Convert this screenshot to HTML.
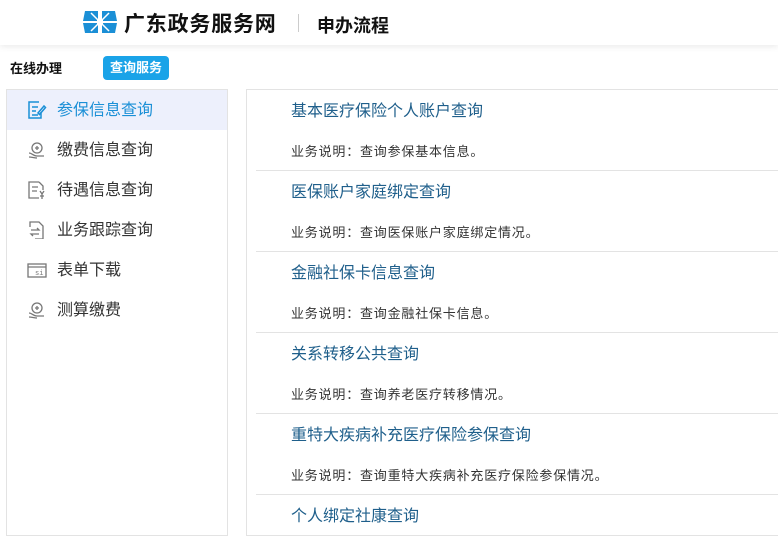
<!DOCTYPE html>
<html><head><meta charset="utf-8"><style>
*{margin:0;padding:0;box-sizing:border-box}
body{width:778px;height:540px;background:#fff;font-family:"Liberation Sans","Noto Sans CJK SC",sans-serif;position:relative;overflow:hidden;color:#333}
.hdr{position:absolute;left:0;top:0;width:778px;height:45px;background:#fff;box-shadow:0 2px 6px rgba(0,0,0,.08)}
.logo{position:absolute;left:83px;top:11px}
.t1{position:absolute;left:124px;top:8px;font-size:21px;font-weight:bold;color:#111;letter-spacing:0.8px}
.sep{position:absolute;left:298px;top:14px;width:1px;height:18px;background:#ccc}
.t2{position:absolute;left:317px;top:12px;font-size:18px;font-weight:bold;color:#111}
.tab1{position:absolute;left:10px;top:58px;font-size:13px;font-weight:bold;color:#111}
.tab2{position:absolute;left:103px;top:56px;width:66px;height:24px;border-radius:4px;background:#1aa3e8;color:#fff;font-size:13px;font-weight:bold;text-align:center;line-height:24px}
.left{position:absolute;left:6px;top:89px;width:222px;height:447px;border:1px solid #e3e3e3}
.row{position:absolute;left:0;width:220px;height:40px;font-size:16px;color:#333;line-height:42px;padding-left:50px}
.row.act{background:#edf0fc;color:#1a8fd6}
.row svg{position:absolute;left:20px;top:11px}
.right{position:absolute;left:246px;top:89px;width:540px;height:447px;border:1px solid #e3e3e3}
.it{position:absolute;left:291px;font-size:16px;color:#1f5f8b}
.ds{position:absolute;left:291px;font-size:13px;color:#333;letter-spacing:0.8px}
.dv{position:absolute;left:256px;width:522px;height:1px;background:#e3e3e3}
</style></head><body>
<div class="hdr">
<svg class="logo" width="34" height="22" viewBox="0 0 34 22"><polygon points="2,0 15,0 15,10 0,10" fill="#1b8fd6"/><polygon points="19,0 32,0 34,10 19,10" fill="#1b8fd6"/><polygon points="0,12 15,12 15,22 2,22" fill="#1b8fd6"/><polygon points="19,12 34,12 32,22 19,22" fill="#1b8fd6"/><g stroke="#fff" stroke-width="1.5"><line x1="17" y1="0" x2="17" y2="22"/><line x1="0" y1="11" x2="34" y2="11"/><line x1="8" y1="2" x2="26" y2="20"/><line x1="26" y1="2" x2="8" y2="20"/></g><rect x="14" y="8" width="6" height="6" fill="#fff"/></svg>
<div class="t1">广东政务服务网</div>
<div class="sep"></div>
<div class="t2">申办流程</div>
</div>
<div class="tab1">在线办理</div>
<div class="tab2">查询服务</div>
<div class="left">
<div class="row act" style="top:0"><svg width="20" height="18" viewBox="0 0 20 18" fill="none" stroke="#1a8fd6" stroke-width="1.5"><path d="M12 1H2v16h12v-6"/><path d="M5 6h6M5 10h4M5 14h6"/><path d="M11 12l6-7 1.5 1.5-6 7z"/></svg>参保信息查询</div>
<div class="row" style="top:40px"><svg width="20" height="18" viewBox="0 0 20 18" fill="none" stroke="#777" stroke-width="1.3"><circle cx="10" cy="7" r="5"/><path d="M2 12c3 0 4 3 8 3h7M2 16c3 0 5 1 8 1"/><path d="M8 7h4M10 5v4"/></svg>缴费信息查询</div>
<div class="row" style="top:80px"><svg width="20" height="18" viewBox="0 0 20 18" fill="none" stroke="#777" stroke-width="1.3"><path d="M12 1H2v16h10M12 1l4 4v4"/><path d="M5 6h6M5 10h5"/><path d="M13 10l2 3 2-3M15 13v5M13 15h4"/></svg>待遇信息查询</div>
<div class="row" style="top:120px"><svg width="20" height="18" viewBox="0 0 20 18" fill="none" stroke="#777" stroke-width="1.3"><path d="M3 6V1h9l4 4v13H8"/><path d="M4 9h8l-2-2M12 13H4l2 2"/></svg>业务跟踪查询</div>
<div class="row" style="top:160px"><svg width="20" height="18" viewBox="0 0 20 18" fill="none" stroke="#777" stroke-width="1.3"><rect x="1" y="3" width="18" height="13"/><path d="M1 6h18"/><text x="8" y="14" font-size="7" fill="#777" stroke="none" font-family="Liberation Mono">si</text></svg>表单下载</div>
<div class="row" style="top:200px"><svg width="20" height="18" viewBox="0 0 20 18" fill="none" stroke="#777" stroke-width="1.3"><circle cx="10" cy="7" r="5"/><path d="M2 12c3 0 4 3 8 3h7M2 16c3 0 5 1 8 1"/><path d="M8 7h4M10 5v4"/></svg>测算缴费</div>
</div>
<div class="right"></div>
<div class="it" style="top:97px">基本医疗保险个人账户查询</div>
<div class="ds" style="top:141px">业务说明：查询参保基本信息。</div>
<div class="dv" style="top:170px"></div>
<div class="it" style="top:178px">医保账户家庭绑定查询</div>
<div class="ds" style="top:222px">业务说明：查询医保账户家庭绑定情况。</div>
<div class="dv" style="top:251px"></div>
<div class="it" style="top:259px">金融社保卡信息查询</div>
<div class="ds" style="top:303px">业务说明：查询金融社保卡信息。</div>
<div class="dv" style="top:332px"></div>
<div class="it" style="top:340px">关系转移公共查询</div>
<div class="ds" style="top:384px">业务说明：查询养老医疗转移情况。</div>
<div class="dv" style="top:413px"></div>
<div class="it" style="top:421px">重特大疾病补充医疗保险参保查询</div>
<div class="ds" style="top:465px">业务说明：查询重特大疾病补充医疗保险参保情况。</div>
<div class="dv" style="top:494px"></div>
<div class="it" style="top:502px">个人绑定社康查询</div>
</body></html>
